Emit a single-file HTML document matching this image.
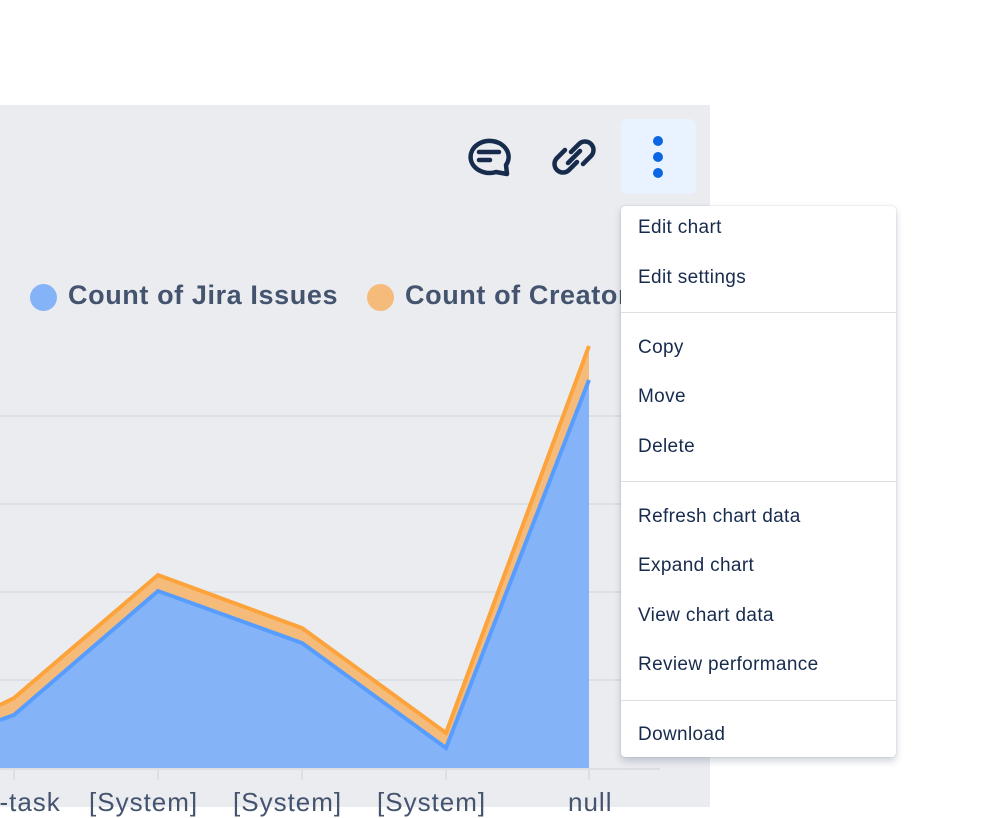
<!DOCTYPE html>
<html><head><style>
body{margin:0;width:999px;height:807px;background:#fff;position:relative;overflow:hidden;font-family:"Liberation Sans",sans-serif}
.panel{position:absolute;left:0;top:105px;width:710px;height:702px;background:#ebecf0}
.menu{position:absolute;left:621px;top:206px;width:275px;height:551px;background:#fff;border-radius:4px;box-shadow:0 4px 8px rgba(9,30,66,.2),0 0 1px rgba(9,30,66,.3)}
.it{position:absolute;left:17px;font-size:19px;letter-spacing:0.35px;color:#172b4d}
.dv{position:absolute;left:0;right:0;height:1px;background:#dcdfe4}
.leg{position:absolute;top:280px;font-size:27px;letter-spacing:0.6px;font-weight:bold;color:#44546f}
.dot{position:absolute;top:284px;width:27px;height:27px;border-radius:50%}
.lb{position:absolute;top:787px;font-size:26px;letter-spacing:1px;color:#44546f}
</style></head><body>
<div class="panel"></div>
<svg style="position:absolute;left:0;top:0" width="710" height="807">
<g stroke="#dcdfe4" stroke-width="2"><line x1="0" y1="416" x2="660" y2="416"/><line x1="0" y1="504" x2="660" y2="504"/><line x1="0" y1="592" x2="660" y2="592"/><line x1="0" y1="680" x2="660" y2="680"/><line x1="0" y1="769" x2="660" y2="769"/>
<line x1="14" y1="770" x2="14" y2="780"/><line x1="158" y1="770" x2="158" y2="780"/><line x1="302" y1="770" x2="302" y2="780"/><line x1="446" y1="770" x2="446" y2="780"/><line x1="589" y1="770" x2="589" y2="780"/></g>
<polygon points="0,705 14,698 158,575 302,628 446,733 589,346 589,380 446,748 302,643 158,591 14,715 0,720" fill="#f5bb7a"/>
<polygon points="0,720 14,715 158,591 302,643 446,748 589,380 589,768 0,768" fill="#85b3f8"/>
<polyline points="0,720 14,715 158,591 302,643 446,748 589,380" fill="none" stroke="#579dff" stroke-width="4"/>
<polyline points="0,705 14,698 158,575 302,628 446,733 589,346" fill="none" stroke="#fca33b" stroke-width="4"/>
<rect x="621" y="119" width="75" height="75" rx="6" fill="#e9f2ff"/>
<circle cx="658" cy="141" r="5" fill="#0c66e4"/><circle cx="658" cy="157" r="5" fill="#0c66e4"/><circle cx="658" cy="173" r="5" fill="#0c66e4"/>
<g fill="none" stroke="#172b4d" stroke-width="4.5" stroke-linecap="round">
<path d="M496 172 A19 16 0 1 1 506 165 L507 174 Z" stroke-linejoin="round"/>
<line x1="479" y1="152" x2="499" y2="152"/><line x1="479" y1="160" x2="490" y2="160"/>
<path d="M571 152 L579 144 A8 8 0 0 1 591 156 L583 164"/>
<path d="M577 162 L569 170 A8 8 0 0 1 557 158 L565 150"/>
<line x1="568" y1="163" x2="580" y2="151"/>
</g>
</svg>
<div class="dot" style="left:30px;background:#85b3f8"></div><div class="leg" style="left:68px">Count of Jira Issues</div>
<div class="dot" style="left:367px;background:#f5bb7a"></div><div class="leg" style="left:405px;width:216px;overflow:hidden;white-space:nowrap">Count of Creator</div>
<div class="lb" style="left:-16px">b-task</div><div class="lb" style="left:89px">[System]</div><div class="lb" style="left:233px">[System]</div><div class="lb" style="left:377px">[System]</div><div class="lb" style="left:568px">null</div>
<div class="menu">
<div class="it" style="top:11px">Edit chart</div>
<div class="it" style="top:61px">Edit settings</div>
<div class="dv" style="top:106px"></div>
<div class="it" style="top:131px">Copy</div>
<div class="it" style="top:180px">Move</div>
<div class="it" style="top:230px">Delete</div>
<div class="dv" style="top:275px"></div>
<div class="it" style="top:300px">Refresh chart data</div>
<div class="it" style="top:349px">Expand chart</div>
<div class="it" style="top:399px">View chart data</div>
<div class="it" style="top:448px">Review performance</div>
<div class="dv" style="top:494px"></div>
<div class="it" style="top:518px">Download</div>
</div>
</body></html>
